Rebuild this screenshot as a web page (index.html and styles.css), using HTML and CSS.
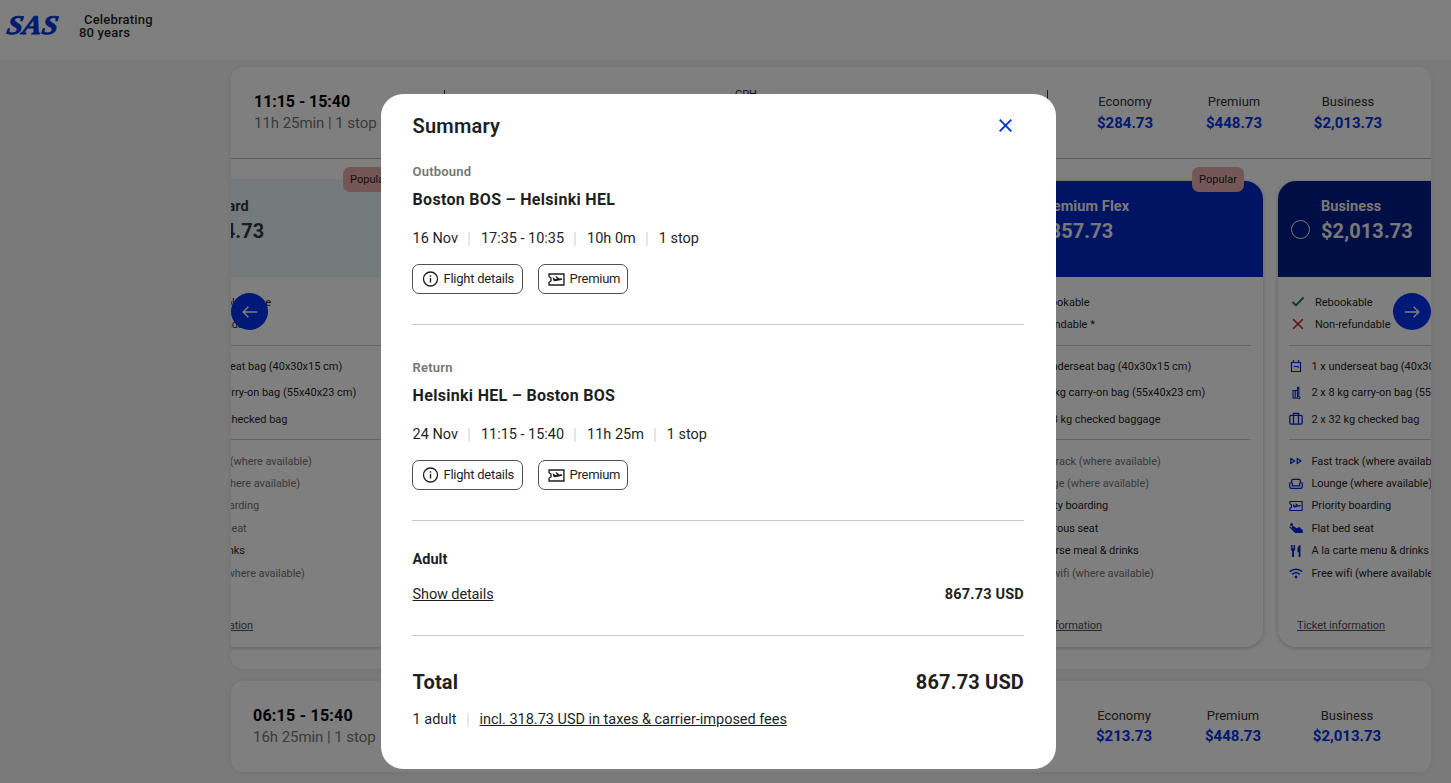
FILE: index.html
```
<!DOCTYPE html>
<html lang="en">
	<head>
		<meta charset="UTF-8" />
		<meta name="viewport" content="width=device-width, initial-scale=1.0" />
		<title>SAS - Select flights</title>
		<link rel="stylesheet" href="styles.css">
	</head>
	<body>
		<svg class="sprite" width="0" height="0">
			<symbol id="i-check" viewBox="0 0 14 14"><path d="M1.5 7 5 10.500l7.5-8" stroke-width="1.9" /></symbol>
			<symbol id="i-cross" viewBox="0 0 14 14"><path d="m2.2 2.2 9.6 9.6M11.8 2.2l-9.6 9.6" stroke-width="1.6" /></symbol>
			<symbol id="i-underseat" viewBox="0 0 14 14"><path d="M2.5 3.5h9v9h-9zM4.500 3.500V1M9.500 3.500V1M4.800 7.500h4.400v1.200" stroke-width="1.200" /></symbol>
			<symbol id="i-carryon" viewBox="0 0 14 14"><path d="M4 4.500h4.500v7.500H4zM6.200 4.500V12M8.500 11V1.200h1.300v9" stroke-width="1.100" /><circle cx="9.900" cy="11.600" r="1.200" /></symbol>
			<symbol id="i-checked" viewBox="0 0 14 14"><rect x=".8" y="3.4" width="12.4" height="8.8" rx="1.4" stroke-width="1.300" /><path d="M4.500 3.400v8.800M9.500 3.400v8.800M4.500 3.200V1.400h5v1.800" stroke-width="1.300" /></symbol>
			<symbol id="i-fast" viewBox="0 0 14 14"><path d="m1.800 4.600 3.800 2.400-3.800 2.400zM8.200 4.600 12 7 8.200 9.400z" stroke-width="1.200" /></symbol>
			<symbol id="i-lounge" viewBox="0 0 14 14"><path d="M2.600 5.500V3.800q0-1.500 1.500-1.500h5.800q1.500 0 1.500 1.500v1.700M3.300 6.300v2.500h7.400V6.300q.2-.8 1.300-.8t1.300.8v3.200q0 1.900-1.900 1.900H2.600q-1.900 0-1.900-1.900V6.300q.200-.8 1.300-.8t1.300.8z" stroke-width="1.200" /></symbol>
			<symbol id="i-ticket" viewBox="0 0 16 14"><path d="M1 1.800h14v10.400H1V9.600L2.800 8.400V5.600L1 4.400z" stroke-width="1.300" /><path class="solid" d="m4.300 5 1.200.3 1.200 1.200 1.800-.2L6.900 4h1.200l2.500 2.100 2-.2c1.300 0 1.300 1.300.1 1.500l-6.200 1.300q-1 .1-1.500-.9z" /></symbol>
			<symbol id="i-seat" viewBox="0 0 14 14"><circle class="solid" cx="2.600" cy="3.600" r="1.500" /><path class="solid" d="m3.800 4.600 3.800 2.600 2.900-1.200 3.300 3.300v2.200H6.800L2.500 6.600z" /><path d="m.6 5.600 5.800 5.900h7.400" stroke-width="1.200" /></symbol>
			<symbol id="i-meal" viewBox="0 0 14 14"><path class="solid" d="M1.800 1h1v3.500h.7V1h1v3.500h.7V1h1v4.300q0 1.200-1.200 1.700v6H3.100V7Q1.800 6.500 1.800 5.300zM11.500 1v12H9.700V8.300H8.500V4.500Q8.700 1.500 11.500 1z" /></symbol>
			<symbol id="i-wifi" viewBox="0 0 14 14"><path d="M.7 5.700q6.300-5 12.600 0M3.200 8.300q3.800-3 7.600 0" stroke-width="1.600" /><circle class="solid" cx="7" cy="11" r="1.400" /></symbol>
			<symbol id="i-info" viewBox="0 0 16 16"><circle cx="8" cy="8" r="7" stroke-width="1.300" /><path d="M8 7v4.500M8 4.300v1.400" stroke-width="1.400" /></symbol>
			<symbol id="i-right" viewBox="0 0 16 14"><path d="M.8 7h14M9.600 1.800 14.800 7l-5.200 5.200" /></symbol>
			<symbol id="i-left" viewBox="0 0 16 14"><path d="M15.200 7h-14M6.400 1.800 1.200 7l5.200 5.200" /></symbol>
		</svg>

		<header class="site-header">
			<svg class="logo" viewBox="0 0 56 22"><text x="3" y="19" textLength="51" lengthAdjust="spacingAndGlyphs" transform="skewX(-10)">SAS</text></svg>
			<div class="tagline"><span>Celebrating</span>80 years</div>
		</header>

		<main class="results">
			<section class="flight flight-open">
				<div class="flight-row">
					<div class="flight-times">
						<strong>11:15 - 15:40</strong>
						<span>11h 25min | 1 stop</span>
					</div>
					<div class="route"><i></i><span>CPH</span><i></i></div>
					<div class="fares">
						<div class="fare">Economy<b>$284.73</b></div>
						<div class="fare">Premium<b>$448.73</b></div>
						<div class="fare">Business<b>$2,013.73</b></div>
					</div>
				</div>
				<div class="carousel">
					<div class="track" id="track">
						<!-- Fare cards are added by the script -->
					</div>
					<button class="arrow arrow-prev" aria-label="Previous"><svg><use href="#i-left" /></svg></button>
					<button class="arrow arrow-next" aria-label="Next"><svg><use href="#i-right" /></svg></button>
				</div>
			</section>

			<section class="flight flight-closed">
				<div class="flight-row">
					<div class="flight-times">
						<strong>06:15 - 15:40</strong>
						<span>16h 25min | 1 stop</span>
					</div>
					<div class="fares">
						<div class="fare">Economy<b>$213.73</b></div>
						<div class="fare">Premium<b>$448.73</b></div>
						<div class="fare">Business<b>$2,013.73</b></div>
					</div>
				</div>
			</section>
		</main>

		<div class="overlay">
			<div class="modal" role="dialog">
				<div class="modal-head">
					<h2>Summary</h2>
					<button class="close" aria-label="Close"><svg><use href="#i-cross" /></svg></button>
				</div>

				<div class="leg">
					<div class="leg-label">Outbound</div>
					<h3>Boston BOS – Helsinki HEL</h3>
					<div class="leg-info"><span>16 Nov</span><span>17:35 - 10:35</span><span>10h 0m</span><span>1 stop</span></div>
					<div class="chips">
						<button class="chip chip-info"><svg><use href="#i-info" /></svg>Flight details</button>
						<button class="chip"><svg><use href="#i-ticket" /></svg>Premium</button>
					</div>
				</div>

				<div class="leg">
					<div class="leg-label">Return</div>
					<h3>Helsinki HEL – Boston BOS</h3>
					<div class="leg-info"><span>24 Nov</span><span>11:15 - 15:40</span><span>11h 25m</span><span>1 stop</span></div>
					<div class="chips">
						<button class="chip chip-info"><svg><use href="#i-info" /></svg>Flight details</button>
						<button class="chip"><svg><use href="#i-ticket" /></svg>Premium</button>
					</div>
				</div>

				<div class="passenger">
					<h4>Adult</h4>
					<div class="line">
						<a class="link">Show details</a>
						<b>867.73 USD</b>
					</div>
				</div>

				<div class="total">
					<div class="line">
						<b>Total</b>
						<b>867.73 USD</b>
					</div>
					<div class="leg-info"><span>1 adult</span><span><a class="link">incl. 318.73 USD in taxes &amp; carrier-imposed fees</a></span></div>
				</div>
			</div>
		</div>

		<script>
			// a leading "-" greys the row out, a leading "!" gives it a cross
			const fares = [
				{
					name: "Standard", price: "$354.73", theme: "economy", popular: true,
					rules: ["Rebookable at fee", "!Non-refundable"],
					bags: ["1 x underseat bag (40x30x15 cm)", "1 x 8 kg carry-on bag (55x40x23 cm)", "1 x 23 kg checked bag"],
					extras: ["-Fast track (where available)", "-Lounge (where available)", "-Priority boarding", "-Standard seat", "Meal & drinks", "-Free wifi (where available)"],
				},
				{
					name: "Flex", price: "$504.73", theme: "economy",
					rules: ["Rebookable", "Refundable *"],
					bags: ["1 x underseat bag", "1 x 8 kg carry-on bag", "2 x 23 kg checked bag"],
					extras: ["Fast track", "-Lounge", "-Priority boarding", "-Standard seat", "Meal & drinks", "-Free wifi"],
				},
				{
					name: "Premium", price: "$448.73", theme: "premium",
					rules: ["Rebookable", "!Non-refundable"],
					bags: ["1 x underseat bag", "2 x 8 kg carry-on bag", "2 x 23 kg checked bag"],
					extras: ["-Fast track", "-Lounge", "Priority boarding", "Generous seat", "3-course meal & drinks", "-Free wifi"],
				},
				{
					name: "Premium Flex", price: "$857.73", theme: "premium", popular: true,
					rules: ["Rebookable", "Refundable *"],
					bags: ["1 x underseat bag (40x30x15 cm)", "2 x 8 kg carry-on bag (55x40x23 cm)", "2 x 23 kg checked baggage"],
					extras: ["-Fast track (where available)", "-Lounge (where available)", "Priority boarding", "Generous seat", "3-course meal & drinks", "-Free wifi (where available)"],
				},
				{
					name: "Business", price: "$2,013.73", theme: "business",
					rules: ["Rebookable", "!Non-refundable"],
					bags: ["1 x underseat bag (40x30x15 cm)", "2 x 8 kg carry-on bag (55x40x23 cm)", "2 x 32 kg checked bag"],
					extras: ["Fast track (where available)", "Lounge (where available)", "Priority boarding", "Flat bed seat", "A la carte menu & drinks", "Free wifi (where available)"],
				},
			];
			const bagIcons = ["underseat", "carryon", "checked"];
			const extraIcons = ["fast", "lounge", "ticket", "seat", "meal", "wifi"];

			function row(text, icon) {
				const off = text.startsWith("-");
				const label = text.replace(/^[-!]/, "").replace("&", "&amp;");
				return `<li class="${off ? "off " : ""}icon-${icon}"><svg><use href="#i-${icon}" /></svg>${label}</li>`;
			}

			function createCard(fare) {
				const card = document.createElement("article");
				card.className = `card ${fare.theme}`;
				card.innerHTML = `
					${fare.popular ? '<span class="badge">Popular</span>' : ""}
					<div class="card-head">
						<span class="radio"></span>
						<div><div class="name">${fare.name}</div><div class="price">${fare.price}</div></div>
					</div>
					<div class="card-body">
						<ul class="rules">${fare.rules.map((t) => row(t, t.startsWith("!") ? "cross" : "check")).join("")}</ul>
						<ul class="bags">${fare.bags.map((t, i) => row(t, bagIcons[i])).join("")}</ul>
						<ul class="extras">${fare.extras.map((t, i) => row(t, extraIcons[i])).join("")}</ul>
						<a class="ticket-info">Ticket information</a>
					</div>
				`;
				return card;
			}

			const track = document.getElementById("track");
			fares.forEach((fare) => track.appendChild(createCard(fare)));
		</script>
	</body>
</html>
```
FILE: styles.css
```
:root {
	--blue: #0032e6;
	--text: #1f1f1f;
	--muted: #757575;
	--line: #c8c8c8;
}
* {
	box-sizing: border-box;
}
body {
	margin: 0;
	height: 100vh;
	overflow: hidden;
	background: #f5f5f5;
	color: var(--text);
	font-family: Roboto, "Liberation Sans", sans-serif;
}
button {
	font: inherit;
	color: inherit;
	padding: 0;
}
ul {
	list-style: none;
	margin: 0;
	padding: 0;
}
.sprite {
	position: absolute;
}
svg {
	fill: none;
	stroke: currentColor;
	flex: none;
}
.solid {
	fill: currentColor;
	stroke: none;
}

/* header */
.site-header {
	height: 60px;
	background: #fff;
	display: flex;
	padding: 13px 0 0 6px;
}
.logo {
	width: 56px;
	height: 22px;
	margin-top: 2px;
	overflow: visible;
}
.logo text {
	font: italic bold 27px "Liberation Serif", serif;
	fill: var(--blue);
	stroke: var(--blue);
	stroke-width: 0.8;
}
.tagline {
	margin-left: 17px;
	font-size: 13px;
	font-weight: 500;
	line-height: 13px;
	letter-spacing: 0.2px;
}
.tagline span {
	display: block;
	padding-left: 5px;
}

/* results */
.results {
	width: 1200px;
	margin: 7px 0 0 231px;
}
.flight {
	background: #fff;
	border-radius: 12px;
	box-shadow: 0 0 6px rgba(0, 0, 0, 0.08);
	overflow: hidden;
}
.flight-open {
	height: 602px;
	margin-bottom: 12px;
}
.flight-row {
	height: 91px;
	display: flex;
	padding: 24px 23px 0;
}
.flight-times {
	width: 190px;
	line-height: 21px;
	font-size: 15px;
	letter-spacing: -0.05px;
	color: var(--muted);
}
.flight-times strong {
	display: block;
	font-size: 16px;
	font-weight: 700;
	line-height: 22px;
	color: #000;
}
.flight-closed .flight-times {
	margin-left: -1px;
}
.flight-closed .flight-times strong {
	letter-spacing: 0.25px;
}
.route {
	width: 604px;
	display: flex;
	justify-content: space-between;
	font-size: 11px;
	line-height: 8px;
}
.route i {
	width: 1px;
	height: 16px;
	margin-top: -1px;
	background: #333;
}
.fares {
	display: grid;
	grid-template-columns: 110px 108px 120px;
	margin-left: auto;
	text-align: center;
}
.fare {
	font-size: 13px;
	line-height: 22px;
	color: #333;
}
.fare b {
	display: block;
	margin-top: -1px;
	font-size: 15px;
	font-weight: 700;
	color: var(--blue);
}
.flight-closed .fares {
	margin-right: 1px;
}
.flight-closed .fare b {
	margin-top: -2px;
}

/* fare cards */
.carousel {
	position: relative;
	height: 511px;
	border-top: 1px solid #b4b4b4;
	overflow: hidden;
}
.track {
	display: flex;
	gap: 15px;
	margin-left: -85px;
	padding-top: 22px;
}
.card {
	position: relative;
	flex: none;
	width: 268px;
	height: 466px;
	border-radius: 18px;
	box-shadow: 0 1px 4px rgba(0, 0, 0, 0.25);
}
.badge {
	position: absolute;
	top: -14px;
	right: 19px;
	width: 52px;
	height: 25px;
	border-radius: 7px;
	background: #e8acac;
	font-size: 11px;
	line-height: 25px;
	text-align: center;
}
.card-head {
	height: 96px;
	display: flex;
	align-items: center;
	padding: 0 0 20px 13px;
	border-radius: 18px 18px 0 0;
	color: #f0f0f0;
}
.economy .card-head {
	background: #ebf4fa;
	color: #333a44;
}
.premium .card-head {
	background: #0028c8;
}
.business .card-head {
	background: #001c8c;
}
.radio {
	width: 19px;
	height: 19px;
	border: 1px solid;
	border-radius: 50%;
	margin: 21px 11px 0 0;
}
.name {
	font-size: 14.5px;
	font-weight: 700;
	line-height: 20px;
	margin-top: 4px;
	letter-spacing: 0.1px;
}
.price {
	font-size: 20px;
	font-weight: 700;
	line-height: 29px;
	letter-spacing: 0.1px;
}
.card-body {
	padding: 14px 12px 0 11px;
	font-size: 11px;
}
.card-body li {
	display: flex;
	align-items: center;
	white-space: nowrap;
}
.card-body li svg {
	width: 14px;
	height: 14px;
	margin-right: 8.5px;
	color: #0028c8;
}
.rules {
	height: 54px;
}
.rules li {
	height: 22px;
	padding-left: 2px;
}
.card-body .rules svg {
	margin-right: 10px;
}
.card-body .icon-check svg {
	color: #0a8060;
}
.card-body .icon-cross svg {
	color: #c82832;
}
.bags {
	height: 94px;
	padding-top: 7px;
	border-top: 1px solid var(--line);
	letter-spacing: -0.03px;
}
.bags li {
	height: 26.5px;
}
.extras {
	padding-top: 10px;
	border-top: 1px solid var(--line);
	letter-spacing: -0.07px;
}
.extras li {
	height: 22.4px;
}
.off {
	color: var(--muted);
}
.ticket-info {
	display: inline-block;
	margin: 35px 0 0 8px;
	color: #505050;
	text-decoration: underline;
	letter-spacing: -0.08px;
}
.arrow {
	position: absolute;
	top: 134px;
	width: 37px;
	height: 37px;
	border: 0;
	border-radius: 50%;
	background: #0032f0;
	color: #fff;
	display: flex;
	align-items: center;
	justify-content: center;
}
.arrow svg {
	width: 16px;
	height: 14px;
	stroke-width: 1.4;
}
.arrow-prev {
	left: 0;
}
.arrow-next {
	right: 0;
	width: 38px;
}

/* summary dialog */
.overlay {
	position: fixed;
	inset: 0;
	background: rgba(0, 0, 0, 0.5);
}
.modal {
	width: 675px;
	height: 675px;
	margin: 94px 0 0 381px;
	padding: 19px 32px 0 31px;
	background: #fff;
	border-radius: 22px;
}
.modal-head {
	display: flex;
	justify-content: space-between;
	align-items: center;
	height: 26px;
}
h2,
h3,
h4 {
	margin: 0;
}
h2 {
	font-size: 20px;
	font-weight: 600;
	letter-spacing: 0.2px;
}
h2,
h3,
h4,
.leg-label,
.leg-info,
.line {
	padding-left: 0.6px;
}
.close {
	border: 0;
	background: none;
	color: #0a32dc;
	width: 17px;
	height: 17px;
	margin: -2px 10px 0 0;
}
.close svg {
	display: block;
	width: 17px;
	height: 17px;
	stroke-width: 1.7;
}
.leg {
	height: 196px;
	padding-top: 24px;
	border-bottom: 1px solid var(--line);
}
.leg:nth-child(2) {
	height: 186px;
}
.leg + .leg {
	padding-top: 34px;
}
.leg-label {
	font-size: 13px;
	font-weight: 600;
	line-height: 18px;
	letter-spacing: 0.2px;
	color: var(--muted);
}
h3 {
	font-size: 16px;
	line-height: 20px;
	margin-top: 9px;
	letter-spacing: 0.3px;
}
.leg-info {
	display: flex;
	margin-top: 19px;
	font-size: 14.5px;
	line-height: 20px;
	letter-spacing: -0.02px;
}
.leg-info span + span::before {
	content: "";
	display: inline-block;
	width: 2px;
	height: 14px;
	margin: 0 11px 0 10px;
	background: #e6e6e6;
	vertical-align: -3px;
}
.chips {
	display: flex;
	gap: 15px;
	margin-top: 15px;
}
.chip {
	width: 90px;
	height: 30px;
	padding: 0 0 1px 9px;
	display: flex;
	align-items: center;
	border: 1px solid #505050;
	border-radius: 7px;
	background: none;
	font-size: 13px;
	letter-spacing: -0.25px;
}
.chip-info {
	width: 111px;
}
.chip svg {
	width: 17px;
	height: 15px;
	margin: 1px 4.5px 0 0;
}
.chip-info svg {
	height: 16px;
}
.passenger {
	height: 115px;
	padding-top: 29px;
	border-bottom: 1px solid var(--line);
}
h4 {
	font-size: 14.5px;
	line-height: 20px;
}
.line {
	display: flex;
	justify-content: space-between;
	align-items: center;
}
.passenger .line {
	margin-top: 15px;
	font-size: 14.5px;
	line-height: 20px;
}
.passenger .line b {
	letter-spacing: 0.2px;
}
.passenger .link {
	letter-spacing: -0.12px;
}
.link {
	text-decoration: underline;
}
.total .line {
	padding-top: 33px;
	font-size: 20px;
	line-height: 26px;
	letter-spacing: 0.15px;
}
.total .leg-info {
	margin-top: 15px;
}
```
